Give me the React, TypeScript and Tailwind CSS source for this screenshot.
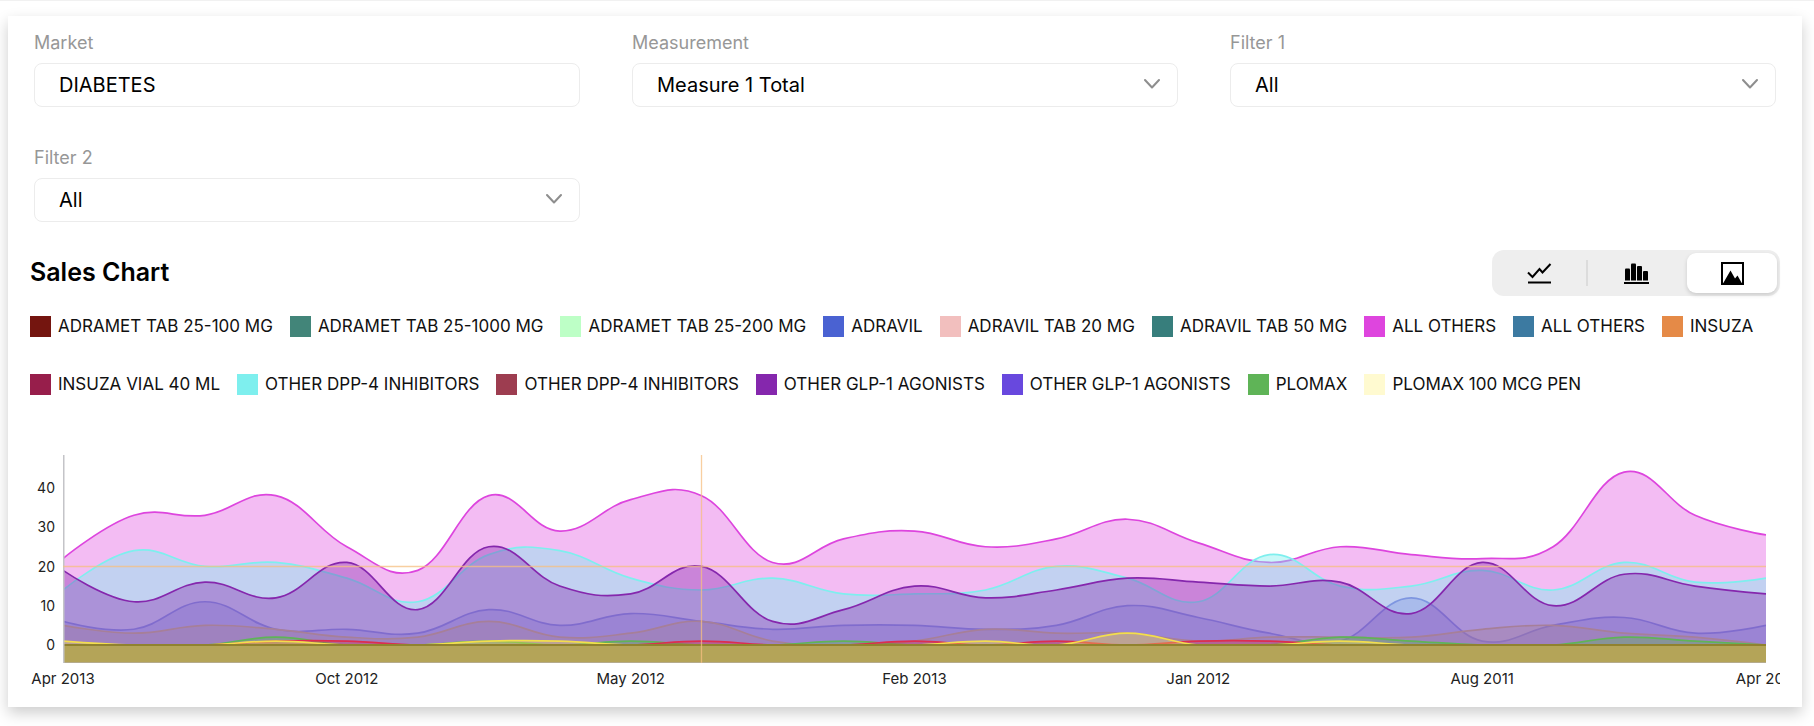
import { useState } from 'react';
import { clsx } from 'clsx';

type View = 'line' | 'bar' | 'area';

interface Series {
  name: string;
  color: string;
  opacity: number;
  values: number[];
}

const LEGEND = [
  { name: 'ADRAMET TAB 25-100 MG', swatch: 'bg-[#74150f]' },
  { name: 'ADRAMET TAB 25-1000 MG', swatch: 'bg-[#428579]' },
  { name: 'ADRAMET TAB 25-200 MG', swatch: 'bg-[#bdffc6]' },
  { name: 'ADRAVIL', swatch: 'bg-[#4a62d2]' },
  { name: 'ADRAVIL TAB 20 MG', swatch: 'bg-[#f2bfbe]' },
  { name: 'ADRAVIL TAB 50 MG', swatch: 'bg-[#377e7c]' },
  { name: 'ALL OTHERS', swatch: 'bg-[#de45de]' },
  { name: 'ALL OTHERS', swatch: 'bg-[#3c7aa1]' },
  { name: 'INSUZA', swatch: 'bg-[#e58a47]' },
  { name: 'INSUZA VIAL 40 ML', swatch: 'bg-[#971e4b]' },
  { name: 'OTHER DPP-4 INHIBITORS', swatch: 'bg-[#7eefee]' },
  { name: 'OTHER DPP-4 INHIBITORS', swatch: 'bg-[#9d3d50]' },
  { name: 'OTHER GLP-1 AGONISTS', swatch: 'bg-[#8527ad]' },
  { name: 'OTHER GLP-1 AGONISTS', swatch: 'bg-[#6848de]' },
  { name: 'PLOMAX', swatch: 'bg-[#5fb457]' },
  { name: 'PLOMAX 100 MCG PEN', swatch: 'bg-[#fffad0]' },
];

const SERIES: Series[] = [
  {
    name: 'Adravil',
    color: '#4a62d2',
    opacity: 0.36,
    values: [6, 4, 11, 4, 4, 3, 9, 5, 8, 6, 4, 5, 5, 4, 5, 10, 7, 3, 1, 12, 1, 5, 7, 3, 5],
  },
  {
    name: 'All others',
    color: '#dd45de',
    opacity: 0.36,
    values: [22, 33, 33, 38, 25, 19, 38, 29, 37, 38, 21, 27, 29, 25, 27, 32, 26, 21, 25, 23, 22, 25, 44, 33, 28],
  },
  {
    name: 'Insuza',
    color: '#e58a47',
    opacity: 0.36,
    values: [5, 3, 5, 4, 2, 2, 6, 2, 3, 6, 1, 0, 1, 4, 3, 3, 1, 2, 2, 2, 4, 5, 3, 2, 0],
  },
  {
    name: 'DPP-4 inhibitors',
    color: '#7eefee',
    opacity: 0.42,
    values: [14, 24, 20, 21, 17, 11, 23, 24, 17, 14, 17, 13, 13, 14, 20, 17, 11, 23, 15, 15, 19, 14, 21, 16, 17],
  },
  {
    name: 'GLP-1 agonists',
    color: '#8527ad',
    opacity: 0.37,
    values: [19, 11, 16, 12, 21, 9, 25, 15, 13, 20, 6, 9, 15, 12, 14, 17, 16, 15, 16, 8, 21, 10, 18, 15, 13],
  },
  {
    name: 'Plomax',
    color: '#5fb457',
    opacity: 0.36,
    values: [0, 0, 0, 2, 0, 0, 1, 0, 1, 0, 0, 1, 0, 0, 0, 0, 0, 0, 2, 1, 0, 0, 2, 1, 0],
  },
  {
    name: 'Insuza vial',
    color: '#dc2d50',
    opacity: 0.36,
    values: [0, 0, 0, 1, 1, 0, 0, 0, 0, 1, 0, 0, 1, 0, 1, 0, 1, 1, 0, 0, 0, 0, 0, 0, 0],
  },
  {
    name: 'Plomax pen',
    color: '#f3de4c',
    opacity: 0.36,
    values: [1, 0, 0, 1, 0, 0, 1, 1, 0, 0, 0, 0, 0, 1, 0, 3, 0, 0, 1, 0, 0, 0, 0, 0, 0],
  },
];

const MONTHS = ['Apr 2013', 'Oct 2012', 'May 2012', 'Feb 2013', 'Jan 2012', 'Aug 2011', 'Apr 2011'];
const TICKS = [40, 30, 20, 10, 0];

const WIDTH = 1703;
const HEIGHT = 208;
const ZERO_Y = 190;
const UNIT = 3.93;
const TENSION = 0.2;

function linePath(values: number[]) {
  const step = WIDTH / (values.length - 1);
  const pts = values.map((v, i) => [i * step, ZERO_Y - v * UNIT]);
  const slope = pts.map((p, i) => {
    const prev = pts[i - 1];
    const next = pts[i + 1];
    if (!prev || !next) return [0, 0];
    return [(next[0] - prev[0]) * TENSION, (next[1] - prev[1]) * TENSION];
  });
  let d = `M${pts[0][0]},${pts[0][1]}`;
  for (let i = 1; i < pts.length; i++) {
    const [x0, y0] = pts[i - 1];
    const [x1, y1] = pts[i];
    d += `C${x0 + slope[i - 1][0]},${y0 + slope[i - 1][1]} ${x1 - slope[i][0]},${y1 - slope[i][1]} ${x1},${y1}`;
  }
  return d;
}

function AreaChart() {
  return (
    <div className="overflow-hidden">
      <div className="flex pr-[14px]">
        {/* Value axis */}
        <div className="flex w-[33px] flex-col justify-between pt-[25px] pr-2 pb-[10px] text-right text-sm leading-4 text-[#222]">
          {TICKS.map((tick) => (
            <span key={tick}>{tick}</span>
          ))}
        </div>

        {/* Plot */}
        <svg
          className="h-[208px] min-w-0 flex-1"
          viewBox={`0 0 ${WIDTH} ${HEIGHT}`}
          preserveAspectRatio="none"
          role="img"
          aria-label="Sales by month"
        >
          {SERIES.map((s) => {
            const line = linePath(s.values);
            return (
              <g key={s.name}>
                <path d={`${line}V${HEIGHT}H0Z`} fill={s.color} fillOpacity={s.opacity} />
                <path d={line} fill="none" stroke={s.color} strokeWidth={1.7} vectorEffect="non-scaling-stroke" />
              </g>
            );
          })}
          <rect x={0} y={ZERO_Y} width={WIDTH} height={HEIGHT - ZERO_Y} fill="#b4a458" />
          <path d={`M0,${ZERO_Y}H${WIDTH}`} stroke="#90822f" strokeWidth={2} />
          <path d={`M0,${HEIGHT - 0.5}H${WIDTH}`} stroke="#b5ab8c" strokeWidth={1} />
          <path d={`M0,0V${HEIGHT}`} stroke="#c4c4c8" strokeWidth={3} />
          {/* Crosshair */}
          <path d={`M0,111.5H${WIDTH}M638.5,0V${HEIGHT}`} stroke="#f6bf80" strokeOpacity={0.75} strokeWidth={1.3} />
        </svg>
      </div>

      {/* Month axis */}
      <div className="mt-[6px] mr-[14px] ml-[33px] flex justify-between text-[15px] leading-5 text-[#222]">
        {MONTHS.map((month) => (
          <span key={month} className="flex w-0 justify-center whitespace-nowrap">
            {month}
          </span>
        ))}
      </div>
    </div>
  );
}

function Chevron() {
  return (
    <svg className="pointer-events-none absolute top-[15px] right-[18px] h-3 w-4" viewBox="0 0 16 12" fill="none" stroke="#8e8e8e" strokeWidth={2}>
      <path strokeLinecap="round" strokeLinejoin="round" d="M1 2l7 7.5L15 2" />
    </svg>
  );
}

const FIELD =
  'h-11 w-full appearance-none rounded-lg border border-[#ececec] bg-white px-6 text-xl text-black outline-none';

function SelectField({ id, label, value }: { id: string; label: string; value: string }) {
  return (
    <div>
      <label htmlFor={id} className="mb-2 block text-lg leading-6 text-[#979797]">
        {label}
      </label>
      <div className="relative">
        <select id={id} className={FIELD}>
          <option>{value}</option>
        </select>
        <Chevron />
      </div>
    </div>
  );
}

const ICONS: Record<View, React.ReactNode> = {
  line: (
    <>
      <path d="M1 11.5l4.5 4.500 7-8 3 3.500L23.500 3" fill="none" stroke="currentColor" strokeWidth={2} />
      <path d="M1 20.500h23v2H1z" />
    </>
  ),
  bar: (
    <>
      <path d="M1 8.500q0-1 1-1h3q1 0 1 1V19.500H1z" />
      <path d="M7 3.500q0-1 1-1h3q1 0 1 1V19.500H7z" />
      <path d="M13 6q0-1 1-1h3q1 0 1 1V19.500H13z" />
      <path d="M19 11q0-1 1-1h3q1 0 1 1V19.500H19z" />
      <path d="M0 21h25v2H0z" />
    </>
  ),
  area: (
    <>
      <path d="M2 2h21v21H2z" fill="none" stroke="currentColor" strokeWidth={2} />
      <path d="M3 22.500L10.500 9.500l4.500 8 2.500-3L22 22.500z" />
    </>
  ),
};

function ViewToggle() {
  const [view, setView] = useState<View>('area');
  return (
    <div className="flex h-[46px] w-72 rounded-xl bg-[#eeeeee]">
      {(['line', 'bar', 'area'] as View[]).map((v) => (
        <button
          key={v}
          type="button"
          aria-label={`${v} chart`}
          aria-pressed={view === v}
          onClick={() => setView(v)}
          className="flex flex-1 items-center"
        >
          <span
            className={clsx(
              'flex flex-1 items-center justify-center',
              view === v ? 'mx-[3px] h-10 rounded-[9px] bg-white shadow-[0_2px_4px_rgba(0,0,0,0.15)]' : 'h-[26px]',
              v === 'line' && 'border-r-2 border-[#dcdcdc]',
            )}
          >
            <svg className="h-[25px] w-[25px]" viewBox="0 0 25 25" fill="currentColor">
              {ICONS[v]}
            </svg>
          </span>
        </button>
      ))}
    </div>
  );
}

export default function App() {
  return (
    <div className="min-h-screen bg-white pb-[19px] font-['Inter','Liberation_Sans',sans-serif] text-black">
      <div className="mb-[15px] h-px bg-[#f1f1f1]" />
      <main className="mr-3 ml-2 bg-white px-[22px] pt-[15px] pb-[18px] shadow-[0_6px_14px_rgba(0,0,0,0.2)]">
        {/* Filters */}
        <form className="grid grid-cols-3 gap-x-[52px] gap-y-[39px] px-1">
          <div>
            <label htmlFor="market" className="mb-2 block text-lg leading-6 text-[#979797]">
              Market
            </label>
            <input id="market" type="text" defaultValue="DIABETES" className={FIELD} />
          </div>
          <SelectField id="measurement" label="Measurement" value="Measure 1 Total" />
          <SelectField id="filter-1" label="Filter 1" value="All" />
          <SelectField id="filter-2" label="Filter 2" value="All" />
        </form>

        {/* Header */}
        <div className="mt-7 flex items-center justify-between">
          <h2 className="text-[25px] font-semibold">Sales Chart</h2>
          <ViewToggle />
        </div>

        {/* Legend */}
        <ul className="mt-5 mb-[60px] flex flex-wrap gap-x-[17px] gap-y-[37px]">
          {LEGEND.map((item, i) => (
            <li key={i} className="flex h-[21px] items-center gap-[7px] text-[17px] whitespace-nowrap text-[#111]">
              <span className={clsx('h-[21px] w-[21px]', item.swatch)} />
              {item.name}
            </li>
          ))}
        </ul>

        <AreaChart />
      </main>
    </div>
  );
}
